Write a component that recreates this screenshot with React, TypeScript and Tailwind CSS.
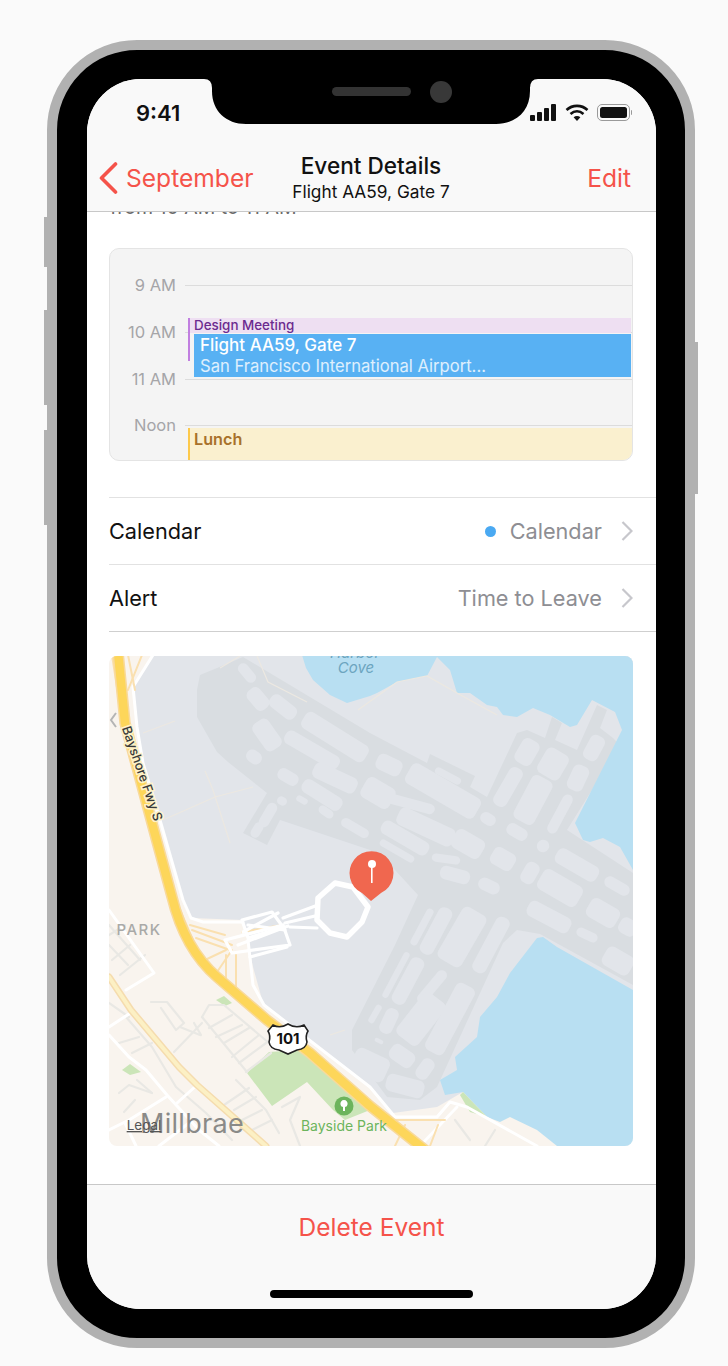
import React from 'react'

const FONT = 'font-["Inter","Noto_Sans",sans-serif]'

// holes in the runway mass: cx, cy, length, thickness, angle
const aprons: number[][] = [
  [247, 673, 22, 10, 50], [258, 699, 24, 15, 50], [283, 707, 30, 14, 38], [335, 737, 72, 18, 32],
  [267, 735, 32, 18, 55], [312, 750, 60, 14, 30], [254, 757, 16, 12, 35], [288, 777, 22, 12, 30],
  [335, 778, 46, 16, 25], [322, 795, 44, 14, 32], [268, 815, 26, 10, -60], [257, 830, 16, 9, -60],
  [282, 801, 10, 8, 30], [302, 800, 12, 6, 30], [326, 812, 16, 8, 35], [355, 828, 30, 9, 30],
  [389, 765, 26, 16, 25], [443, 791, 78, 22, 30], [448, 776, 28, 7, 28], [378, 793, 32, 22, 30],
  [411, 804, 48, 10, 15], [426, 827, 60, 18, 25], [405, 838, 52, 14, 30], [397, 851, 38, 7, 30],
  [446, 859, 28, 8, 8], [455, 875, 30, 13, 15], [468, 844, 32, 20, 30], [488, 819, 16, 11, 30],
  [517, 832, 22, 12, 30], [543, 846, 12, 12, 30], [503, 859, 24, 18, 30], [577, 865, 46, 16, 30],
  [617, 886, 27, 11, 30], [530, 873, 22, 14, -60], [489, 886, 22, 12, 25], [560, 888, 44, 22, 30],
  [508, 787, 42, 14, -60], [527, 752, 26, 18, -60], [553, 764, 28, 24, -60], [533, 800, 48, 22, -62],
  [578, 778, 26, 16, -65], [560, 814, 42, 10, -62], [594, 748, 26, 15, -62], [549, 917, 46, 16, 28],
  [603, 913, 32, 20, 30], [587, 935, 22, 9, 25], [618, 961, 30, 20, 30], [628, 927, 18, 16, 30],
  [491, 945, 60, 14, -62], [462, 937, 58, 26, -60], [436, 931, 50, 14, -62], [422, 927, 40, 7, -62],
  [408, 981, 50, 14, -62], [396, 975, 50, 6, -62], [432, 987, 40, 10, -50], [421, 1019, 52, 26, -52],
  [450, 1019, 74, 20, -62], [375, 1014, 20, 6, -60], [389, 1021, 26, 13, -65], [379, 1041, 9, 4, 25],
  [402, 1056, 26, 16, 35], [425, 1069, 22, 13, -55], [370, 1065, 36, 24, 25], [405, 1086, 38, 17, 15],
]

const whiteRoads = [
  'M153 655L133 687L137 727L143 763L160 820L183 900L191 918L203 922L243 922',
  'M248 940L253 985L264 1005L370 1087L395 1117H437L450 1102L467 1107L537 1146',
  'M457 1107L420 1146',
  'M109 910L154 973L126 990',
  'M109 1027L132 1012',
  'M109 1035L129 1057L146 1070L167 1095L199 1130L219 1146',
  'M177 1103L197 1085',
  'M166 1097L129 1120L109 1130',
  'M125 1123L136 1146',
  'M159 1146L189 1123',
]

const greyStreets = [
  'M109 925L140 960', 'M109 945L128 965', 'M112 960L130 945', 'M120 975L145 955', 'M125 925L109 935',
  'M202 1017L209 1005H224L269 1043', 'M202 1017L247 1072', 'M209 1028L232 1015', 'M216 1037L242 1025', 'M224 1043L249 1028',
  'M232 1057L259 1035', 'M239 1063L266 1043', 'M246 1072L271 1053', 'M174 1052L202 1023',
  'M151 1002H167L184 1023L176 1030L161 1008', 'M180 1027L200 1035', 'M194 1023L201 1035',
  'M224 1105L249 1088', 'M236 1080L266 1110L279 1133', 'M234 1110L256 1097', 'M242 1120L262 1110', 'M252 1130L272 1120',
  'M282 1107L300 1097L290 1120L300 1146', 'M126 1017L152 1047L176 1087L206 1113L232 1140',
  'M109 1003L129 1017', 'M119 1043L139 1037', 'M132 1053L152 1043', 'M119 1093L129 1085L152 1093', 'M137 1080L152 1093',
  'M455 1120L470 1140', 'M495 1130L485 1146', 'M135 1100L124 1112',
]

const ramps = [
  'M112 655L122 720L150 830L178 905L200 957L235 990',
  'M128 655L135 690',
  'M142 655L128 690',
  'M190 925L225 935',
  'M192 930L232 945',
  'M196 938L230 950',
  'M205 960L226 950',
  'M215 975L232 950',
  'M226 990L226 955',
  'M236 992L236 955',
  'M242 932L282 925',
  'M395 1120H445',
  'M395 1146L405 1125',
  'M438 1125L430 1146',
]

const freeway = 'M118 652L125 723L153 827L172 897C180 930 195 958 217 977L267 1020L310 1053L370 1106L425 1150'
const localRoad = 'M109 977L131 1010L179 1067L197 1085L266 1146'

function MapPanel() {
  return (
    <div className="mt-[24px] mr-[23px] h-[490px] overflow-hidden rounded-[8px]">
      <svg viewBox="109 656 524 490" className="block h-full w-full" fontFamily="Inter, sans-serif">
        <rect x="109" y="656" width="524" height="490" fill="#f9f4ee" />
        <polygon
          fill="#e2e5ea"
          points="153,655 133,687 137,727 143,763 160,820 183,900 191,918 243,920 253,967 263,1003 370,1087 393,1113 437,1107 463,1092 633,990 633,655"
        />
        <polygon
          fill="#d9dde1"
          points="197,690 200,675 217,668 243,657 370,733 427,763 430,754 475,776 470,787 487,797 517,733 527,730 545,738 552,717 562,723 555,740 577,750 597,705 607,710 600,728 613,738 620,745 567,830 633,873 633,985 560,945 540,934 517,930 503,943 437,1087 420,1100 387,1097 352,1050 352,1030 395,945 418,895 395,870 370,850 280,820 267,845 243,833 267,793 228,762 217,752 197,717"
        />
        {aprons.map(([cx, cy, w, h, a], i) => {
          const bw = w * 1.02
          const bh = h * 1.05
          return (
            <rect
              key={i}
              x={cx - bw / 2}
              y={cy - bh / 2}
              width={bw}
              height={bh}
              rx={Math.min(bh / 2, 6)}
              fill="#e2e5ea"
              transform={`rotate(${a} ${cx} ${cy})`}
            />
          )
        })}
        {/* water */}
        <polygon
          fill="#b8dff2"
          points="302,655 306,668 313,680 330,695 347,703 370,696 377,693 397,682 427,676 437,657 450,670 457,693 470,693 487,705 497,707 503,715 517,717 533,708 550,715 570,727 577,725 592,700 615,712 622,730 575,823 583,840 590,842 603,838 620,847 633,870 633,655"
        />
        <polygon
          fill="#b8dff2"
          points="633,990 557,947 543,937 537,938 510,973 497,997 480,1017 477,1037 455,1057 457,1070 440,1080 445,1095 463,1092 487,1117 500,1122 510,1117 537,1130 557,1146 633,1146"
        />
        <polygon fill="#cbe5b8" points="463,1092 487,1117 470,1112 460,1095" />
        {/* thin service roads */}
        <g fill="none" stroke="#ece8e1" strokeWidth="1.2">
          <path d="M143 733L175 721M163 820L215 797L253 787M205 771L213 790L230 843" />
          <path d="M257 656L268 682L307 702M220 668L240 656M358 710L397 682L427 676L457 693L497 715" />
          <path d="M330 1035L345 1030" />
        </g>
        {/* green */}
        <g fill="#cbe5b8">
          <polygon points="247,1073 269,1052 300,1050 370,1110 345,1120 333,1110 307,1082 272,1106" />
          <polygon points="216,1000 224,996 232,1003 225,1006" />
          <polygon points="122,1070 130,1064 141,1072 130,1075" />
        </g>
        <g fill="none" strokeLinecap="round" strokeLinejoin="round">
          {greyStreets.map((d, i) => (
            <path key={i} d={d} stroke="#e9e8e4" strokeWidth="2.2" />
          ))}
          {whiteRoads.map((d, i) => (
            <path key={i} d={d} stroke="#ffffff" strokeWidth="3" />
          ))}
          <path d={localRoad} stroke="#f5dcae" strokeWidth="7" />
          <path d={localRoad} stroke="#fcf0c4" strokeWidth="4" />
          {ramps.map((d, i) => (
            <path key={i} d={d} stroke="#fae0b0" strokeWidth="2" />
          ))}
          <path d={freeway} stroke="#f8d99b" strokeWidth="11.5" />
          <path d={freeway} stroke="#fdd65a" strokeWidth="8.5" />
          {/* terminal loop */}
          <polygon
            points="318,898 335,883 353,887 368,907 362,922 347,937 330,933 317,920"
            stroke="#ffffff"
            strokeWidth="5.5"
          />
          <g stroke="#ffffff" strokeWidth="3.2">
            <path d="M318 905L283 918M317 928L290 927M315 916L285 923" />
            <path d="M242 920L272 912L283 927L248 938Z" />
            <path d="M225 940L283 925L290 945L232 953Z" />
            <path d="M250 957L287 947" />
            <path d="M243 932L278 913M248 925L285 930M238 945L288 926" />
          </g>
        </g>
        <text
          x="138"
          y="775"
          fontSize="13"
          fontWeight="500"
          textAnchor="middle"
          fill="#3a3a3a"
          stroke="#fdf2c8"
          strokeWidth="3"
          paintOrder="stroke"
          transform="rotate(71 138 775)"
        >
          Bayshore Fwy S
        </text>
        <path d="M116 713L111 720L116 727" fill="none" stroke="#b5b5b5" strokeWidth="2" />
        <text x="355" y="658" fontSize="15" fontStyle="italic" textAnchor="middle" fill="#6ca5bf">Harbor</text>
        <text x="356" y="673" fontSize="15" fontStyle="italic" textAnchor="middle" fill="#6ca5bf">Cove</text>
        <text x="139" y="935" fontSize="15" fontWeight="500" letterSpacing="1.5" textAnchor="middle" fill="#a9a9a7">PARK</text>
        {/* 101 shield */}
        <path
          d="M273 1025Q280 1029 288 1024Q296 1029 304 1025L308 1031Q305 1036 307 1042Q306 1049 297 1050L288 1054L279 1050Q270 1049 269 1042Q271 1036 268 1031Z"
          fill="#ffffff"
          stroke="#222222"
          strokeWidth="1.6"
        />
        <text x="288" y="1044" fontSize="15" fontWeight="700" textAnchor="middle" fill="#111111">101</text>
        <text x="192" y="1133" fontSize="27" textAnchor="middle" fill="#8a8a88" letterSpacing="0.3">Millbrae</text>
        <text x="144" y="1130" fontSize="13.5" textAnchor="middle" fill="#555555" textDecoration="underline">Legal</text>
        <circle cx="344" cy="1106" r="9.5" fill="#6cb45c" />
        <path d="M344 1100a3.6 3.6 0 0 1 3.5 4.5a2.6 2.6 0 0 1-2.5 2.5v4h-2v-4a2.6 2.6 0 0 1-2.5-2.5a3.6 3.6 0 0 1 3.5-4.5Z" fill="#ffffff" />
        <text x="344" y="1131" fontSize="14" textAnchor="middle" fill="#6cb45c">Bayside Park</text>
        {/* pin */}
        <path d="M371 901L362 893A22 22 0 1 1 381 893Z" fill="#f0674f" />
        <circle cx="372" cy="864" r="4" fill="#ffffff" />
        <rect x="371" y="864" width="1.6" height="19" fill="#ffffff" />
      </svg>
    </div>
  )
}

function CalendarCard() {
  const hours = [
    { label: '9 AM', h: 'h-[47px]' },
    { label: '10 AM', h: 'h-[47px]' },
    { label: '11 AM', h: 'h-[46px]' },
    { label: 'Noon', h: 'h-[35px]' },
  ]
  return (
    <div className="relative mt-[29px] mr-[23px] h-[213px] overflow-hidden rounded-[10px] border border-[#e4e4e4] bg-[#f4f4f4] pt-[36px]">
      {hours.map((hour) => (
        <div key={hour.label} className={`flex items-start ${hour.h}`}>
          <div className="-mt-[10px] w-[66px] text-right text-[16.5px] leading-[20px] text-[#a5a5a8]">{hour.label}</div>
          <div className="ml-[9px] h-px flex-1 bg-[#dcdcdc]" />
        </div>
      ))}

      <div className="absolute top-[69px] left-[78px] h-[43px] w-[2px] bg-[#c17fe0]" />
      <div className="absolute top-[69px] right-px left-[80px] h-[15px] bg-[#eedff2] pl-[4px] text-[13.4px] leading-[15px] font-medium text-[#6b2a8f]">
        Design Meeting
      </div>
      <div className="absolute top-[85px] right-px left-[84px] h-[43px] bg-[#58b1f3] pl-[6px] text-white">
        <div className="text-[17px] leading-[22px] font-medium">Flight AA59, Gate 7</div>
        <div className="text-[16.6px] leading-[21px] text-white/80">San Francisco International Airport...</div>
      </div>
      <div className="absolute top-[179px] right-0 bottom-0 left-[78px] border-l-2 border-[#fdc94b] bg-[#faf0cf] pl-[4px] text-[16.2px] leading-[22px] font-semibold text-[#a8712a]">
        Lunch
      </div>
    </div>
  )
}

function Row({ label, value, dot, last }: { label: string; value: string; dot?: boolean; last?: boolean }) {
  return (
    <div className={`flex h-[67px] items-center border-b pr-[23px] ${last ? 'border-[#cfcfcf]' : 'border-[#e2e2e2]'}`}>
      <span className="flex-1 text-[21.7px] text-[#111111]">{label}</span>
      {dot && <span className="mr-[14px] h-[11px] w-[11px] rounded-full bg-[#4aa9f2]" />}
      <span className="text-[21.7px] text-[#8e8e93]">{value}</span>
      <svg viewBox="0 0 12 20" className="ml-[19px] h-[20px] w-[12px]" fill="none" stroke="#c7c7cc" strokeWidth="2.2">
        <path d="M1.5 1L10.5 10L1.5 19" />
      </svg>
    </div>
  )
}

export default function App() {
  return (
    <div className={`h-[1366px] w-[728px] overflow-hidden bg-[#fafafa] pt-[40px] pl-[47px] ${FONT}`}>
      <div className="relative h-[1308px] w-[648px] rounded-[90px] border-[10px] border-[#b1b1b1] bg-black pt-[29px] pl-[30px]">
        {/* side buttons */}
        <div className="absolute top-[167px] -left-[13px] h-[50px] w-[3px] bg-[#b1b1b1]" />
        <div className="absolute top-[260px] -left-[13px] h-[95px] w-[3px] bg-[#b1b1b1]" />
        <div className="absolute top-[380px] -left-[13px] h-[95px] w-[3px] bg-[#b1b1b1]" />
        <div className="absolute top-[292px] -right-[13px] h-[152px] w-[3px] bg-[#b1b1b1]" />

        <div className="relative flex h-[1230px] w-[569px] flex-col overflow-hidden rounded-[54px] bg-white">
          {/* notch */}
          <svg viewBox="0 0 334 46" className="absolute top-0 left-[117px] h-[46px] w-[334px]">
            <path d="M0 0Q8 0 8 9V12C8 32 22 45 42 45H292C312 45 326 32 326 12V9Q326 0 334 0Z" fill="#000000" />
            <rect x="128" y="8" width="79" height="9" rx="4.5" fill="#333333" />
            <circle cx="237" cy="13" r="11" fill="#383838" />
          </svg>

          <header className="h-[133px] shrink-0 border-b border-[#c8c8c8] bg-[#f9f9f9]">
            <div className="flex h-[67px] items-center justify-between pr-[24px] pl-[49px]">
              <span className="text-[22px] leading-[28px] font-semibold text-[#111111]">9:41</span>
              <div className="flex items-center gap-[8px]">
                <svg viewBox="0 0 27 17" className="h-[17px] w-[27px]" fill="#111111">
                  <rect x="0" y="11" width="5" height="6" rx="1" />
                  <rect x="7" y="8" width="5" height="9" rx="1" />
                  <rect x="14" y="4" width="5" height="13" rx="1" />
                  <rect x="21" y="0" width="5" height="17" rx="1" />
                </svg>
                <svg viewBox="0 0 24 17" className="h-[17px] w-[24px]" fill="none" stroke="#111111" strokeWidth="2.6">
                  <path d="M1.5 6C7.5 0.5 16.5 0.5 22.5 6" />
                  <path d="M5.5 10C9.5 6.5 14.5 6.5 18.5 10" />
                  <path d="M12 17L8.6 13.2C10.5 11.6 13.5 11.6 15.4 13.2Z" fill="#111111" stroke="none" />
                </svg>
                <div className="flex items-center">
                  <div className="h-[17px] w-[33px] rounded-[5px] border border-[#9a9a9a] p-[2px]">
                    <div className="h-full w-full rounded-[2.5px] bg-[#111111]" />
                  </div>
                  <div className="ml-px h-[5px] w-[1.5px] rounded-r-sm bg-[#9a9a9a]" />
                </div>
              </div>
            </div>
            <div className="relative flex h-[63px] items-center justify-between pr-[25px] pl-[12px]">
              <div className="flex items-center gap-[8px] text-[#f5534a]">
                <svg viewBox="0 0 19 32" className="h-[32px] w-[19px]" fill="none" stroke="#f5534a" strokeWidth="3.6" strokeLinecap="round" strokeLinejoin="round">
                  <path d="M16.5 2L2.5 16L16.5 30" />
                </svg>
                <span className="text-[24.6px] leading-[32px]">September</span>
              </div>
              <div className="absolute top-[7px] right-0 left-[-1px] text-center text-[#111111]">
                <div className="text-[22.6px] leading-[26px] font-medium">Event Details</div>
                <div className="text-[17.3px] leading-[26px]">Flight AA59, Gate 7</div>
              </div>
              <span className="text-[24.6px] leading-[32px] text-[#f5534a]">Edit</span>
            </div>
          </header>

          <main className="flex-1 overflow-hidden pl-[22px]">
            <div className="-mt-[17px] h-[24px] pl-[1px] text-[19.5px] leading-[24px] text-[#6a6a6a]">from 10 AM to 11 AM</div>
            <CalendarCard />
            <div className="mt-[36px] border-t border-[#e2e2e2]">
              <Row label="Calendar" value="Calendar" dot />
              <Row label="Alert" value="Time to Leave" last />
            </div>
            <MapPanel />
          </main>

          <footer className="flex h-[125px] shrink-0 flex-col items-center border-t border-[#c8c8c8] bg-[#f9f9f9]">
            <div className="mt-[26px] text-[24.5px] leading-[32px] text-[#f5534a]">Delete Event</div>
            <div className="mt-[47px] h-[8px] w-[203px] rounded-full bg-black" />
          </footer>
        </div>
      </div>
    </div>
  )
}
